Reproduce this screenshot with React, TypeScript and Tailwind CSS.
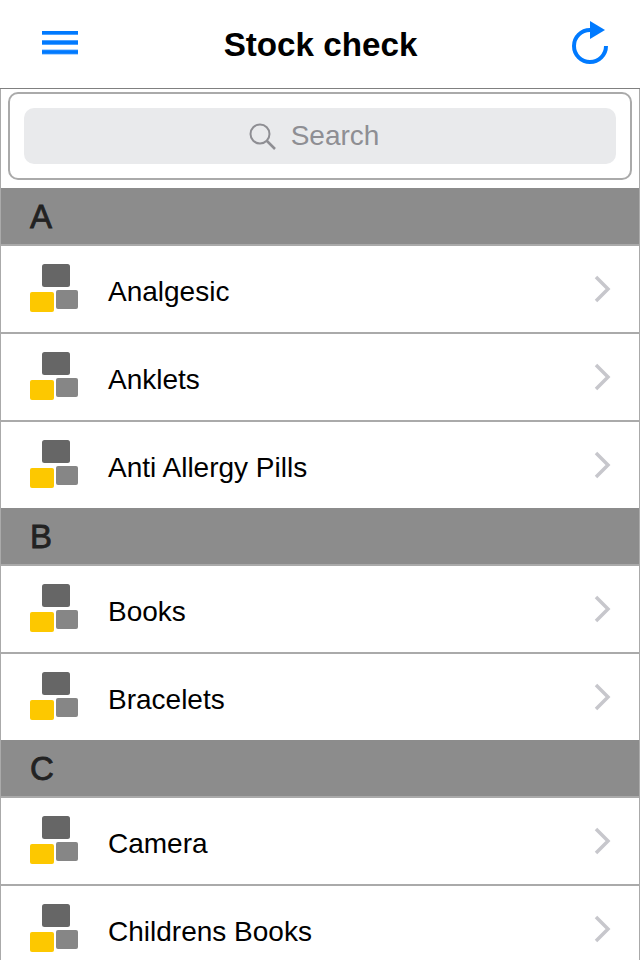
import React from "react";

const sections = [
  { letter: "A", items: ["Analgesic", "Anklets", "Anti Allergy Pills"] },
  { letter: "B", items: ["Books", "Bracelets"] },
  { letter: "C", items: ["Camera", "Childrens Books"] },
];

function CategoryIcon() {
  return (
    <svg width="50" height="50" viewBox="0 0 50 50" className="shrink-0">
      <rect x="12" y="0" width="28" height="23" rx="2.5" fill="#666666" />
      <rect x="0" y="28" width="24" height="20" rx="2" fill="#fdc800" />
      <rect x="26" y="26" width="22" height="19" rx="2" fill="#868686" />
    </svg>
  );
}

function Row({ name }: { name: string }) {
  return (
    <div className="flex h-[88px] items-center border-b-2 border-[#aaaaaa] pl-[29px] pr-[27px] last:h-[86px] last:border-b-0">
      <CategoryIcon />
      <span className="ml-[28px] flex-1 pt-[6px] text-[28px] text-black">{name}</span>
      <svg width="18" height="28" viewBox="0 0 18 28">
        <path d="M2 2l12 12L2 26" fill="none" stroke="#c7c7cc" strokeWidth="3.5" />
      </svg>
    </div>
  );
}

export default function App() {
  return (
    <div className="h-[960px] w-[640px] overflow-hidden bg-white font-['Liberation_Sans',sans-serif]">
      <header className="grid h-[89px] grid-cols-[1fr_auto_1fr] items-center border-b border-[#808080] pl-[42px] pr-[30px]">
        <svg width="36" height="24" viewBox="0 0 36 24" className="mb-[2px]">
          <path d="M0 1.5h36M0 11.5h36M0 21h36" stroke="#66afff" strokeWidth="5" />
          <path d="M0 1.5h36M0 11.5h36M0 21h36" stroke="#007aff" strokeWidth="3.5" />
        </svg>
        <h1 className="ml-[-11px] pt-[2px] text-[33.2px] font-bold text-black">Stock check</h1>
        <svg width="40" height="46" viewBox="0 0 40 46" className="mb-[2px] justify-self-end">
          <path d="M20 10A16 16 0 1 0 36 26" fill="none" stroke="#007aff" strokeWidth="4" />
          <path d="M20 1l15 9-15 9z" fill="#007aff" />
        </svg>
      </header>
      <div className="border-x border-[#aaaaaa]">
        <div className="px-[7px] pb-2 pt-[3px]">
          <div className="rounded-[10px] border-2 border-[#aaaaaa] p-[14px]">
            <div className="flex h-14 items-center justify-center gap-[15px] rounded-[10px] bg-[#e9eaec] pr-[12px] text-[#8e8e93]">
              <svg width="27" height="27" viewBox="0 0 27 27">
                <circle cx="11" cy="11" r="9.5" fill="none" stroke="currentColor" strokeWidth="2" />
                <path d="M18 18l8 8" stroke="currentColor" strokeWidth="2.5" />
              </svg>
              <span className="text-[28px]">Search</span>
            </div>
          </div>
        </div>
        {sections.map((section) => (
          <section key={section.letter}>
            <div className="flex h-[58px] items-center border-b-2 border-[#aaaaaa] bg-[#8c8c8c] pl-[29px] pt-[2px] text-[33px] text-[#222222] [-webkit-text-stroke:0.8px_#222222]">
              {section.letter}
            </div>
            {section.items.map((item) => (
              <Row key={item} name={item} />
            ))}
          </section>
        ))}
      </div>
    </div>
  );
}
